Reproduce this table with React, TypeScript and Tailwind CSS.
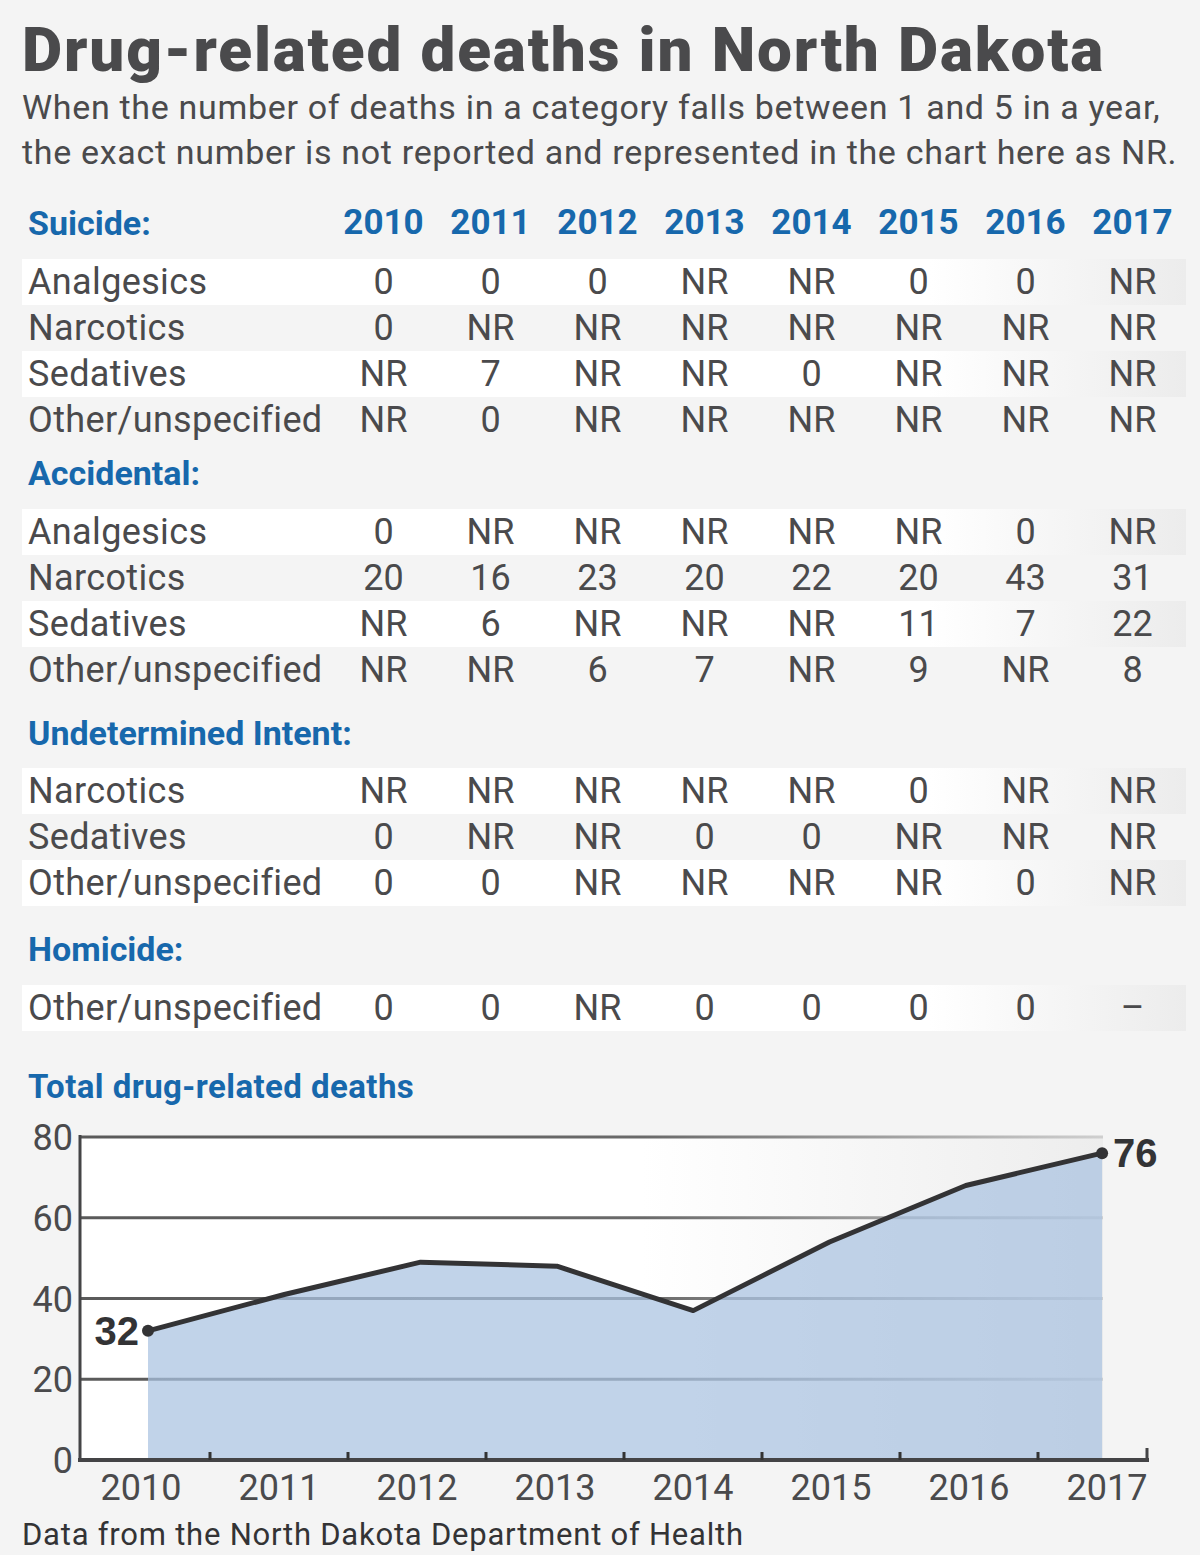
import React from "react";

type Row = { label: string; v: string[] };
type Section = { title: string; rows: Row[]; hCls: string; rCls: string };

const YEARS = ["2010", "2011", "2012", "2013", "2014", "2015", "2016", "2017"];

const SECTIONS: Section[] = [
  {
    title: "Suicide:",
    hCls: "mt-[25px]",
    rCls: "mt-[13px]",
    rows: [
      { label: "Analgesics", v: ["0", "0", "0", "NR", "NR", "0", "0", "NR"] },
      { label: "Narcotics", v: ["0", "NR", "NR", "NR", "NR", "NR", "NR", "NR"] },
      { label: "Sedatives", v: ["NR", "7", "NR", "NR", "0", "NR", "NR", "NR"] },
      { label: "Other/unspecified", v: ["NR", "0", "NR", "NR", "NR", "NR", "NR", "NR"] },
    ],
  },
  {
    title: "Accidental:",
    hCls: "mt-[7px]",
    rCls: "mt-[13px]",
    rows: [
      { label: "Analgesics", v: ["0", "NR", "NR", "NR", "NR", "NR", "0", "NR"] },
      { label: "Narcotics", v: ["20", "16", "23", "20", "22", "20", "43", "31"] },
      { label: "Sedatives", v: ["NR", "6", "NR", "NR", "NR", "11", "7", "22"] },
      { label: "Other/unspecified", v: ["NR", "NR", "6", "7", "NR", "9", "NR", "8"] },
    ],
  },
  {
    title: "Undetermined Intent:",
    hCls: "mt-[17px]",
    rCls: "mt-[12px]",
    rows: [
      { label: "Narcotics", v: ["NR", "NR", "NR", "NR", "NR", "0", "NR", "NR"] },
      { label: "Sedatives", v: ["0", "NR", "NR", "0", "0", "NR", "NR", "NR"] },
      { label: "Other/unspecified", v: ["0", "0", "NR", "NR", "NR", "NR", "0", "NR"] },
    ],
  },
  {
    title: "Homicide:",
    hCls: "mt-[20px]",
    rCls: "mt-[13px]",
    rows: [{ label: "Other/unspecified", v: ["0", "0", "NR", "0", "0", "0", "0", "–"] }],
  },
];

const TOTALS = [32, 41, 49, 48, 37, 54, 68, 76];

function Chart() {
  const y = (v: number) => 350 - v * 4.0375;
  const xs = TOTALS.map((_, i) => 148 + i * 136.3);
  const pts = TOTALS.map((v, i) => `${xs[i]},${y(v)}`).join(" ");
  const area = `M${xs[0]},350 L${TOTALS.map((v, i) => `${xs[i]},${y(v)}`).join(" L")} L${xs[7]},350 Z`;
  const font = "Roboto, sans-serif";
  return (
    <svg width="1200" height="402" viewBox="0 0 1200 402" className="block">
      <defs>
        <linearGradient id="bgfade" x1="0" x2="1" y1="0" y2="0">
          <stop offset="0" stopColor="#ffffff" />
          <stop offset="0.55" stopColor="#ffffff" />
          <stop offset="1" stopColor="#ededed" />
        </linearGradient>
        <linearGradient id="gridfade" x1="0" x2="1" y1="0" y2="0">
          <stop offset="0" stopColor="#5a5a5a" />
          <stop offset="0.55" stopColor="#6a6a6a" />
          <stop offset="1" stopColor="#cfcfcf" />
        </linearGradient>
      </defs>
      <rect x="80" y="27" width="1023" height="323" fill="url(#bgfade)" />
      {[80, 60, 40, 20].map((v) => (
        <rect key={v} x="80" y={y(v) - 1.5} width="1023" height="3" fill="url(#gridfade)" />
      ))}
      <path d={area} fill="#a9c2e0" fillOpacity="0.72" />
      <polyline points={pts} fill="none" stroke="#333335" strokeWidth="5" strokeLinejoin="round" />
      <circle cx={xs[0]} cy={y(32)} r="6" fill="#333335" />
      <circle cx={xs[7]} cy={y(76)} r="6" fill="#333335" />
      <line x1="80" y1="25" x2="80" y2="352" stroke="#444446" strokeWidth="3" />
      <line x1="78" y1="350" x2="1149" y2="350" stroke="#444446" strokeWidth="4" />
      {[0, 1, 2, 3, 4, 5, 6].map((i) => (
        <line key={i} x1={210 + i * 138} y1="342" x2={210 + i * 138} y2="350" stroke="#333" strokeWidth="3" />
      ))}
      <line x1="1147" y1="338" x2="1147" y2="352" stroke="#444446" strokeWidth="3" />
      {[80, 60, 40, 20, 0].map((v) => (
        <text key={v} x="73" y={y(v) + 13} textAnchor="end" fontFamily={font} fontSize="36" fill="#4a4a4c">
          {v}
        </text>
      ))}
      {YEARS.map((yr, i) => (
        <text key={yr} x={141 + i * 138} y="390" textAnchor="middle" fontFamily={font} fontSize="36" fill="#4a4a4c">
          {yr}
        </text>
      ))}
      <text x="139" y={y(32) + 14} textAnchor="end" fontFamily="'Liberation Sans', Arial, sans-serif" fontWeight="700" fontSize="40" fill="#333335">
        32
      </text>
      <text x="1113" y={y(76) + 14} textAnchor="start" fontFamily="'Liberation Sans', Arial, sans-serif" fontWeight="700" fontSize="40" fill="#333335">
        76
      </text>
    </svg>
  );
}

export default function App() {
  return (
    <div className="w-[1200px] h-[1555px] bg-[#f4f4f4] font-['Roboto',sans-serif] text-[#4a4a4c] overflow-hidden">
      <div className="pl-[22px] pt-[19px]">
        <h1 className="text-[62px] leading-[62px] font-black tracking-[0.03em] text-[#4a4a4c] whitespace-nowrap">
          Drug-related deaths in North Dakota
        </h1>
        <p className="mt-[4px] text-[34px] leading-[45px] tracking-[0.02em] text-[#4a4a4c] whitespace-nowrap">
          When the number of deaths in a category falls between 1 and 5 in a year,
          <br />
          the exact number is not reported and represented in the chart here as NR.
        </p>
      </div>

      <div className="ml-[22px] w-[1164px]">
        {SECTIONS.map((s, si) => (
          <div key={s.title}>
            <div className={`grid grid-cols-[308px_repeat(8,107px)] h-[46px] leading-[46px] text-[34px] font-bold text-[#1768ac] ${s.hCls}`}>
              <div className="pl-[6px] whitespace-nowrap">{s.title}</div>
              {si === 0 && YEARS.map((yr) => (
                <div key={yr} className="text-center text-[35px]">
                  {yr}
                </div>
              ))}
            </div>
            <div className={s.rCls}>
              {s.rows.map((r, ri) => (
                <div
                  key={r.label}
                  className={`grid grid-cols-[308px_repeat(8,107px)] h-[46px] leading-[46px] text-[36px] ${
                    ri % 2 === 0 ? "bg-linear-to-r from-white from-78% to-[#ececec]" : ""
                  }`}
                >
                  <div className="pl-[6px] whitespace-nowrap tracking-[0.01em]">{r.label}</div>
                  {r.v.map((v, i) => (
                    <div key={i} className="text-center">
                      {v}
                    </div>
                  ))}
                </div>
              ))}
            </div>
          </div>
        ))}
      </div>

      <div className="mt-[33px] pl-[28px] h-[46px] leading-[46px] text-[33px] font-bold tracking-[0.013em] text-[#1768ac]">
        Total drug-related deaths
      </div>
      <Chart />
      <div className="mt-[3px] pl-[22px] h-[40px] leading-[40px] text-[31px] tracking-[0.025em] text-[#333335] whitespace-nowrap">
        Data from the North Dakota Department of Health
      </div>
    </div>
  );
}
